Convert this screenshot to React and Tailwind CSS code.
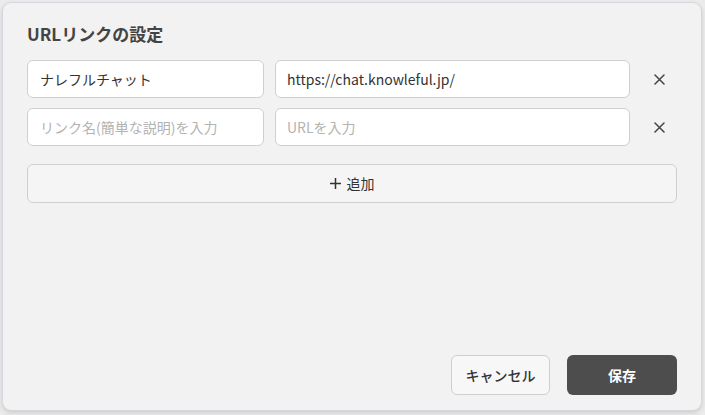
import React, { useState } from 'react';

const App = () => {
  const [links, setLinks] = useState([
    { name: 'ナレフルチャット', url: 'https://chat.knowleful.jp/' },
    { name: '', url: '' },
  ]);

  const update = (idx, key, value) => {
    setLinks(links.map((l, i) => (i === idx ? { ...l, [key]: value } : l)));
  };

  const remove = (idx) => setLinks(links.filter((_, i) => i !== idx));
  const add = () => setLinks([...links, { name: '', url: '' }]);

  return (
    <div
      className="w-[705px] h-[415px] bg-[#ebebeb] p-[2px] pr-[3px] pb-[4px]"
      style={{ fontFamily: '"Noto Sans CJK JP", "Noto Sans", sans-serif' }}
    >
      <div className="h-full flex flex-col bg-[#f2f2f2] border border-[#d6d6de] rounded-[9px] shadow-[0_2px_4px_rgba(0,0,0,0.12)] px-[24px] pt-[19px] pb-[15px]">
        {/* Title */}
        <h2 className="text-[17px] leading-[24px] font-bold text-[#444] mb-[14px]">URLリンクの設定</h2>

        {/* Link rows */}
        <div className="flex flex-col gap-[10px]">
          {links.map((link, idx) => (
            <div key={idx} className="flex items-center">
              <input
                type="text"
                value={link.name}
                onChange={(e) => update(idx, 'name', e.target.value)}
                placeholder="リンク名(簡単な説明)を入力"
                className="w-[237px] h-[38px] bg-white border border-[#cfcfcf] rounded-[6px] px-[12px] text-[14px] text-[#333] placeholder:text-[#b3b3b3] outline-none"
              />
              <input
                type="text"
                value={link.url}
                onChange={(e) => update(idx, 'url', e.target.value)}
                placeholder="URLを入力"
                className="ml-[11px] w-[355px] h-[38px] bg-white border border-[#cfcfcf] rounded-[6px] px-[11px] text-[14px] text-[#333] placeholder:text-[#b3b3b3] outline-none"
              />
              <button
                onClick={() => remove(idx)}
                className="ml-[11px] w-[36px] h-[38px] flex items-center justify-center text-[#444]"
              >
                <svg width="11" height="11" viewBox="0 0 11 11" fill="none" stroke="currentColor" strokeWidth="1.5" strokeLinecap="round">
                  <path d="M1 1L10 10M10 1L1 10" />
                </svg>
              </button>
            </div>
          ))}
        </div>

        {/* Add */}
        <button
          onClick={add}
          className="mt-[18px] w-[650px] h-[39px] bg-[#f5f5f5] border border-[#cfcfcf] rounded-[6px] flex items-center justify-center gap-[6px] text-[14px] text-[#333]"
        >
          <svg width="11" height="11" viewBox="0 0 11 11" fill="none" stroke="currentColor" strokeWidth="1.5">
            <path d="M5.5 0V11M0 5.5H11" />
          </svg>
          <span>追加</span>
        </button>

        {/* Footer */}
        <div className="mt-auto flex justify-end gap-[17px]">
          <button className="w-[99px] h-[40px] bg-[#f7f7f7] border border-[#cfcfcf] rounded-[6px] text-[14px] text-[#333] font-medium">
            キャンセル
          </button>
          <button className="w-[110px] h-[40px] bg-[#4d4d4d] rounded-[6px] text-[14px] text-white font-bold">
            保存
          </button>
        </div>
      </div>
    </div>
  );
};

export default App;
